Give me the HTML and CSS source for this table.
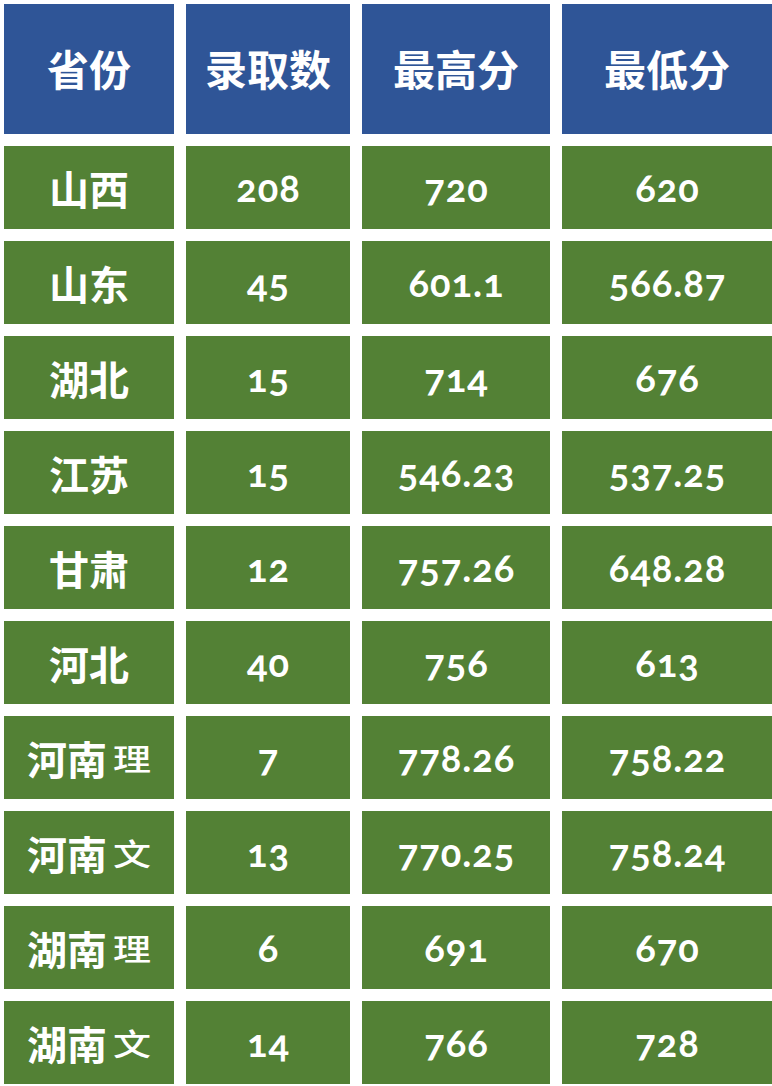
FILE: index.html
```html
<!DOCTYPE html>
<html lang="zh">
<head>
<meta charset="utf-8">
<link rel="stylesheet" href="styles.css">
</head>
<body>
<div class="table">
  <div class="cell head">省份</div><div class="cell head">录取数</div><div class="cell head">最高分</div><div class="cell head">最低分</div>

  <div class="cell prov">山西</div><div class="cell num">208</div><div class="cell num">720</div><div class="cell num">620</div>
  <div class="cell prov">山东</div><div class="cell num">45</div><div class="cell num">601.1</div><div class="cell num">566.87</div>
  <div class="cell prov">湖北</div><div class="cell num">15</div><div class="cell num">714</div><div class="cell num">676</div>
  <div class="cell prov">江苏</div><div class="cell num">15</div><div class="cell num">546.23</div><div class="cell num">537.25</div>
  <div class="cell prov">甘肃</div><div class="cell num">12</div><div class="cell num">757.26</div><div class="cell num">648.28</div>
  <div class="cell prov">河北</div><div class="cell num">40</div><div class="cell num">756</div><div class="cell num">613</div>
  <div class="cell prov">河南<span class="sub">理</span></div><div class="cell num">7</div><div class="cell num">778.26</div><div class="cell num">758.22</div>
  <div class="cell prov">河南<span class="sub">文</span></div><div class="cell num">13</div><div class="cell num">770.25</div><div class="cell num">758.24</div>
  <div class="cell prov">湖南<span class="sub">理</span></div><div class="cell num">6</div><div class="cell num">691</div><div class="cell num">670</div>
  <div class="cell prov">湖南<span class="sub">文</span></div><div class="cell num">14</div><div class="cell num">766</div><div class="cell num">728</div>
</div>
</body>
</html>
```

FILE: styles.css
```css
html, body {
  margin: 0;
  padding: 0;
  background: #ffffff;
}

body {
  width: 772px;
  height: 1086px;
  overflow: hidden;
}

.table {
  display: grid;
  grid-template-columns: 170px 164px 188px 210px;
  grid-template-rows: 130px repeat(10, 83px);
  gap: 12px;
  padding: 4px 0 0 4px;
}

.cell {
  display: flex;
  align-items: center;
  justify-content: center;
  color: #ffffff;
  background: #538135;
}

.head {
  background: #2f5597;
  font-family: "Noto Sans CJK SC", sans-serif;
  font-weight: 700;
  font-size: 42px;
  padding-bottom: 4px;
}

.prov {
  font-family: "Noto Sans CJK SC", sans-serif;
  font-weight: 700;
  font-size: 40px;
}

.sub {
  display: inline-block;
  font-size: 38px;
  font-weight: 500;
  margin-left: 6px;
  transform: scaleY(0.78);
}

.num {
  font-family: "Lato", "Noto Sans", sans-serif;
  font-weight: 700;
  font-size: 38px;
  letter-spacing: 1px;
  padding-left: 1px;
  padding-bottom: 2px;
  font-variant-numeric: oldstyle-nums;
  font-feature-settings: "onum" 1;
}
```
